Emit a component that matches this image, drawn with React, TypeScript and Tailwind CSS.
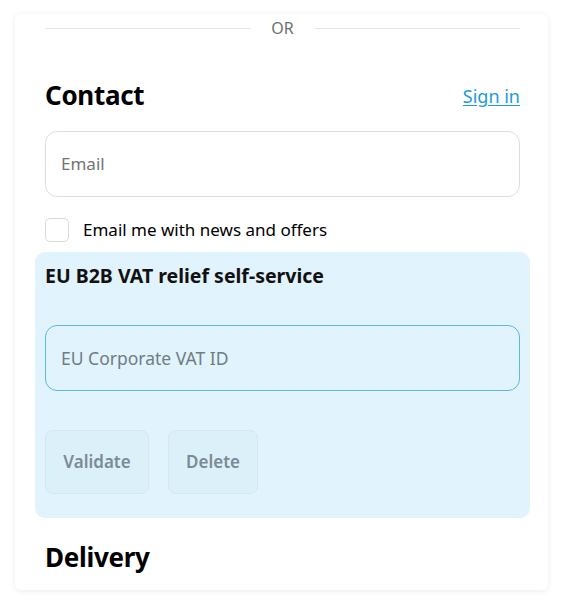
export default function App() {
  return (
    <div className="min-h-screen bg-white pt-[14px] pl-[15px] pr-[16px] font-['Noto_Sans',sans-serif]">
      <div className="w-[533px] h-[576px] overflow-hidden rounded-md bg-white shadow-[0_1px_6px_rgba(0,0,0,0.08)] pl-[30px] pr-[28px] pt-[2px] flex flex-col">
        {/* divider */}
        <div className="shrink-0 flex items-center gap-[20px] h-[24px]">
          <div className="flex-1 h-px bg-[#e6e6e6]" />
          <span className="text-[16px] text-[#707070] leading-none">OR</span>
          <div className="flex-1 h-px bg-[#e6e6e6]" />
        </div>

        {/* Contact */}
        <div className="shrink-0 mt-[40px] flex items-end justify-between h-[28px]">
          <h2 className="text-[26px] font-bold text-black leading-none tracking-[-0.3px]">Contact</h2>
          <a href="#" className="text-[18px] text-[#1b9bd8] underline underline-offset-2 leading-none mb-[3px]">
            Sign in
          </a>
        </div>

        <div className="shrink-0 mt-[23px] h-[66px] rounded-[12px] border border-[#dedede] flex items-center px-[15px]">
          <span className="text-[17px] text-[#737373]">Email</span>
        </div>

        <label className="shrink-0 mt-[21px] flex items-center gap-[14px] h-[24px]">
          <span className="w-[24px] h-[24px] rounded-[5px] border border-[#d9d9d9] bg-white" />
          <span className="text-[17px] text-black">Email me with news and offers</span>
        </label>

        {/* VAT panel */}
        <div className="shrink-0 mt-[10px] -mx-[10px] h-[266px] rounded-[10px] bg-[#e1f3fc] px-[10px] pt-[10px]">
          <h3 className="text-[19.5px] font-bold text-[#111] leading-[28px]">EU B2B VAT relief self-service</h3>
          <div className="mt-[35px] h-[66px] rounded-[12px] border border-[#5bb8e4] flex items-center px-[15px]">
            <span className="text-[17.5px] text-[#6f7d86]">EU Corporate VAT ID</span>
          </div>
          <div className="mt-[39px] flex gap-[19px]">
            <button className="h-[64px] w-[104px] rounded-[8px] border border-[#d3e8f2] bg-[#dcf0f9] text-[17px] font-semibold text-[#7b8b95]">
              Validate
            </button>
            <button className="h-[64px] w-[90px] rounded-[8px] border border-[#d3e8f2] bg-[#dcf0f9] text-[17px] font-semibold text-[#7b8b95]">
              Delete
            </button>
          </div>
        </div>

        <h2 className="shrink-0 mt-[26px] text-[26px] font-bold text-black leading-none tracking-[-0.3px]">Delivery</h2>
      </div>
    </div>
  );
}
